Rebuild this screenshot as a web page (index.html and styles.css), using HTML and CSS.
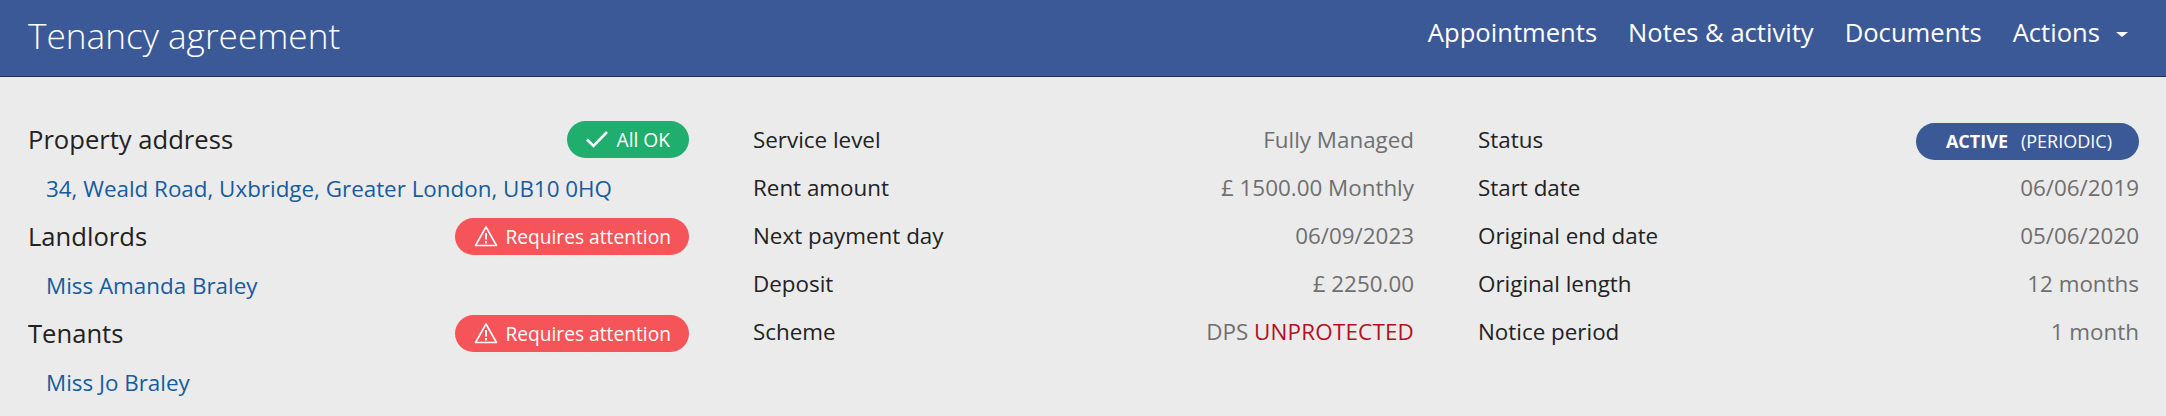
FILE: index.html
```html
<!DOCTYPE html>
<html>
<head>
    <title>Tenancy agreement</title>
    <link rel="stylesheet" href="styles.css">
</head>
<body>
    <header class="topbar">
        <h1 class="title">Tenancy agreement</h1>
        <nav class="nav">
            <a href="#">Appointments</a>
            <a href="#">Notes &amp; activity</a>
            <a href="#">Documents</a>
            <a href="#">Actions<span class="caret"></span></a>
        </nav>
    </header>

    <main class="summary">
        <section class="col">
            <div class="head-row">
                <h3>Property address</h3>
                <span class="pill ok">
                    <svg width="24" height="18" viewBox="0 0 24 18"><path d="M2 9.5l6.5 6.5L22 2" fill="none" stroke="#fff" stroke-width="2.6"/></svg>
                    <span>All OK</span>
                </span>
            </div>
            <a class="link-row" href="#">34, Weald Road, Uxbridge, Greater London, UB10 0HQ</a>
            <div class="head-row">
                <h3>Landlords</h3>
                <span class="pill warn">
                    <svg width="24" height="22" viewBox="0 0 24 22"><path d="M12 2L22.5 20.5H1.5Z" fill="none" stroke="#fff" stroke-width="1.6" stroke-linejoin="round"/><path d="M12 8v6.5M12 16v2.5" stroke="#fff" stroke-width="2"/></svg>
                    <span>Requires attention</span>
                </span>
            </div>
            <a class="link-row" href="#">Miss Amanda Braley</a>
            <div class="head-row">
                <h3>Tenants</h3>
                <span class="pill warn">
                    <svg width="24" height="22" viewBox="0 0 24 22"><path d="M12 2L22.5 20.5H1.5Z" fill="none" stroke="#fff" stroke-width="1.6" stroke-linejoin="round"/><path d="M12 8v6.5M12 16v2.5" stroke="#fff" stroke-width="2"/></svg>
                    <span>Requires attention</span>
                </span>
            </div>
            <a class="link-row" href="#">Miss Jo Braley</a>
        </section>

        <section class="col">
            <div class="row"><span>Service level</span><span class="val">Fully Managed</span></div>
            <div class="row"><span>Rent amount</span><span class="val">£ 1500.00 Monthly</span></div>
            <div class="row"><span>Next payment day</span><span class="val">06/09/2023</span></div>
            <div class="row"><span>Deposit</span><span class="val">£ 2250.00</span></div>
            <div class="row"><span>Scheme</span><span class="val">DPS <span class="bad">UNPROTECTED</span></span></div>
        </section>

        <section class="col">
            <div class="row"><span>Status</span><span class="pill status"><b>ACTIVE</b><small>(PERIODIC)</small></span></div>
            <div class="row"><span>Start date</span><span class="val">06/06/2019</span></div>
            <div class="row"><span>Original end date</span><span class="val">05/06/2020</span></div>
            <div class="row"><span>Original length</span><span class="val">12 months</span></div>
            <div class="row"><span>Notice period</span><span class="val">1 month</span></div>
        </section>
    </main>
</body>
</html>
```

FILE: styles.css
```css
html, body { height: 100%; }
body { margin: 0; background: #ebebeb; color: #222; font-family: "Open Sans", sans-serif; font-size: 22.4px; overflow: hidden; }

.topbar { display: flex; justify-content: space-between; align-items: center; height: 76px; padding: 0 28px; background: #3b5996; border-bottom: 1px solid #1f2f55; color: white; }
.title { margin: 0 0 6px; font-size: 35.2px; font-weight: 300; }
.nav { display: flex; gap: 31px; margin: 0 10px 12px 0; font-size: 25.6px; }
.nav a { color: white; text-decoration: none; }
.caret { display: inline-block; margin-left: 16px; vertical-align: middle; border: 6px solid transparent; border-top-color: white; border-bottom-width: 0; border-top-width: 5px; }

.summary { display: grid; grid-template-columns: repeat(3, 661px); column-gap: 64px; padding: 38px 28px 0; }
.col { display: flex; flex-direction: column; }

.head-row { display: flex; justify-content: space-between; align-items: center; height: 48px; }
.head-row h3 { margin: 0; font-size: 25.6px; font-weight: 400; }
.link-row { display: flex; align-items: center; box-sizing: border-box; height: 49px; padding: 1px 0 0 18px; color: #165c9e; text-decoration: none; }

.row { display: flex; justify-content: space-between; align-items: center; height: 48px; }
.val { color: #6f6f6f; }
.bad { color: #b5101e; letter-spacing: .2px; }

.pill { display: inline-flex; align-items: center; height: 37px; padding: 0 18px; border-radius: 19px; color: white; font-size: 19.2px; }
.pill svg { margin-right: 7px; }
.ok { padding: 0 19px 0 18px; background: #1fae6e; }
.ok svg { margin-right: 8px; }
.warn { padding-left: 19px; background: #f55459; }
.status { margin-top: 4px; padding: 0 27px 0 30px; background: #3b5996; }
.status b { font-size: 18px; font-weight: 700; }
.status small { margin-left: 13px; font-size: 18px; }
```
